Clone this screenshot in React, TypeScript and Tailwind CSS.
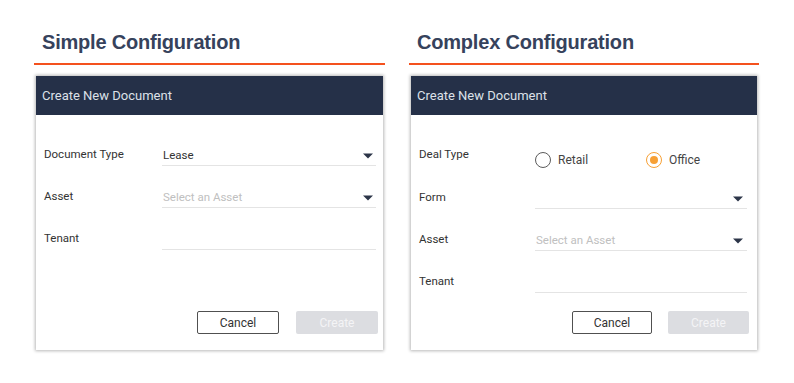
import React from "react";

const Caret = () => (
  <svg width="10" height="6" viewBox="0 0 10 6" className="shrink-0">
    <path d="M0 0.5 L10 0.5 L5 5.5 Z" fill="#2c3548" />
  </svg>
);

const Radio = ({ checked, label }: { checked?: boolean; label: string }) => (
  <div className="flex items-center gap-[7px]">
    <span
      className={
        checked
          ? "w-[16px] h-[16px] rounded-full border-[1.5px] border-[#f7a035] flex items-center justify-center"
          : "w-[16px] h-[16px] rounded-full border-[1.5px] border-[#5b5b5b]"
      }
    >
      {checked && <span className="w-[8px] h-[8px] rounded-full bg-[#f7a035]" />}
    </span>
    <span className="text-[12px] text-[#444]">{label}</span>
  </div>
);

const Row = ({
  label,
  children,
  tall,
  labelW,
}: {
  label: string;
  children: React.ReactNode;
  tall?: boolean;
  labelW: string;
}) => (
  <div className={tall ? "flex h-[43px]" : "flex h-[42px]"}>
    <div className={`${labelW} shrink-0 pt-[6px] text-[11.5px] leading-[16px] text-[#333]`}>
      {label}
    </div>
    {children}
  </div>
);

const Field = ({
  value,
  placeholder,
  caret,
  pr,
}: {
  value?: string;
  placeholder?: boolean;
  caret?: boolean;
  pr: string;
}) => (
  <div
    className={`flex-1 h-[26px] border-b border-[#e4e4e4] flex items-end justify-between pb-[2px] pl-[1px] ${pr}`}
  >
    <span
      className={
        placeholder
          ? "text-[11.5px] leading-[16px] text-[#c0c0c0]"
          : "text-[11.5px] leading-[16px] text-[#333]"
      }
    >
      {value}
    </span>
    {caret && (
      <span className="pb-[4px]">
        <Caret />
      </span>
    )}
  </div>
);

const Buttons = ({ pr, gap, w1, w2 }: { pr: string; gap: string; w1: string; w2: string }) => (
  <div className={`flex justify-end ${gap} ${pr} pb-[16px] mt-auto`}>
    <button
      className={`${w1} h-[23px] border border-[#505050] rounded-[2px] text-[12px] text-[#333] bg-white`}
    >
      Cancel
    </button>
    <button className={`${w2} h-[23px] rounded-[2px] bg-[#dcdde1] text-[12px] text-[#f4f4f6]`}>
      Create
    </button>
  </div>
);

const Card = ({ children }: { children: React.ReactNode }) => (
  <div className="mx-[2px] mt-[11px] h-[274px] bg-white flex flex-col shadow-[0_0_3px_1px_rgba(0,0,0,0.28)]">
    <div className="h-[39px] bg-[#253048] px-[6px] flex items-center text-[13px] text-[#dde1e8]">
      Create New Document
    </div>
    {children}
  </div>
);

const Title = ({ text }: { text: string }) => (
  <>
    <h2
      className="pl-[8px] h-[24px] text-[20px] leading-[24px] font-bold text-[#36425c] tracking-[-0.2px]"
      style={{ fontFamily: '"Liberation Sans", Arial, sans-serif' }}
    >
      {text}
    </h2>
    <div className="mt-[9px] h-[2px] bg-[#f4511e]" />
  </>
);

export default function App() {
  return (
    <div
      className="w-[794px] h-[383px] bg-white flex gap-[24px] pl-[34px] pt-[30px]"
      style={{ fontFamily: "Roboto, 'Noto Sans', sans-serif" }}
    >
      <div className="w-[351px]">
        <Title text="Simple Configuration" />
        <Card>
          <div className="pt-[25px] pl-[8px] pr-[7px]">
            <Row label="Document Type" labelW="w-[118px]">
              <Field value="Lease" caret pr="pr-[3px]" />
            </Row>
            <Row label="Asset" labelW="w-[118px]">
              <Field value="Select an Asset" placeholder caret pr="pr-[3px]" />
            </Row>
            <Row label="Tenant" labelW="w-[118px]">
              <Field pr="pr-[3px]" />
            </Row>
          </div>
          <Buttons pr="pr-[5px]" gap="gap-[17px]" w1="w-[82px]" w2="w-[82px]" />
        </Card>
      </div>
      <div className="w-[350px]">
        <Title text="Complex Configuration" />
        <Card>
          <div className="pt-[25px] pl-[8px] pr-[10px]">
            <Row label="Deal Type" labelW="w-[116px]" tall>
              <div className="flex-1 flex items-start pt-[11px]">
                <div className="w-[111px]">
                  <Radio label="Retail" />
                </div>
                <Radio label="Office" checked />
              </div>
            </Row>
            <Row label="Form" labelW="w-[116px]">
              <Field caret pr="pr-[4px]" />
            </Row>
            <Row label="Asset" labelW="w-[116px]">
              <Field value="Select an Asset" placeholder caret pr="pr-[4px]" />
            </Row>
            <Row label="Tenant" labelW="w-[116px]">
              <Field pr="pr-[4px]" />
            </Row>
          </div>
          <Buttons pr="pr-[8px]" gap="gap-[16px]" w1="w-[80px]" w2="w-[81px]" />
        </Card>
      </div>
    </div>
  );
}
